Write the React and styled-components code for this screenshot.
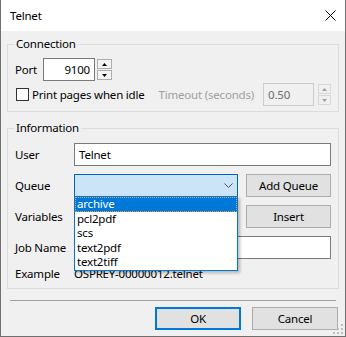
import React from "react";
import styled, { createGlobalStyle } from "styled-components";

const GlobalStyle = createGlobalStyle`
  html, body {
    margin: 0;
    padding: 0;
    background: #ffffff;
  }
  body {
    font-family: "Noto Sans", "Open Sans", sans-serif;
    font-size: 11.5px;
    letter-spacing: -0.2px;
    color: #000;
  }
  * {
    box-sizing: border-box;
  }
`;

const Window = styled.div`
  position: relative;
  width: 346px;
  height: 337px;
  border: 1px solid #6f6f6f;
  border-top: none;
  background: #f0f0f0;
  display: flex;
  flex-direction: column;
`;

const TitleBar = styled.div`
  height: 31px;
  background: #ffffff;
  display: flex;
  align-items: center;
  justify-content: space-between;
  padding: 0 9px 1px 9px;
`;

const Client = styled.div`
  flex: 1;
  display: flex;
  flex-direction: column;
  padding: 0 6px;
`;

const Group = styled.fieldset`
  margin: ${(p) => p.$top}px 0 0 0;
  padding: 0;
  border: 1px solid #dcdcdc;
  min-width: 0;

  legend {
    margin-left: 6px;
    padding: 0 2px;
    line-height: 16px;
  }
`;

const ConnBody = styled.div`
  padding: 6px 7px 5px 7px;
  display: flex;
  flex-direction: column;
  gap: 2px;
`;

const Row = styled.div`
  display: flex;
  align-items: center;
  height: 23px;
`;

const Label = styled.span`
  width: ${(p) => (p.$w ? `${p.$w}px` : "auto")};
  flex: none;
  white-space: nowrap;
  color: ${(p) => (p.$disabled ? "#a0a0a0" : "#000")};
`;

const Edit = styled.div`
  width: ${(p) => p.$w}px;
  height: 23px;
  margin-left: ${(p) => p.$gap || 0}px;
  border: 1px solid ${(p) => (p.$disabled ? "#cccccc" : "#7a7a7a")};
  background: ${(p) => (p.$disabled ? "#f0f0f0" : "#ffffff")};
  color: ${(p) => (p.$disabled ? "#6d6d6d" : "#000")};
  display: flex;
  align-items: center;
  justify-content: ${(p) => (p.$right ? "flex-end" : "flex-start")};
  padding: 0 4px;
  white-space: nowrap;
`;

const Spin = styled.div`
  display: flex;
  flex-direction: column;
  gap: 1px;
  margin-left: ${(p) => p.$gap}px;
  height: 23px;
  justify-content: center;
`;

const SpinBtn = styled.div`
  width: ${(p) => p.$w}px;
  height: 10px;
  border: 1px solid ${(p) => (p.$disabled ? "#d8d8d8" : "#adadad")};
  background: ${(p) => (p.$disabled ? "#f0f0f0" : "#f4f4f4")};
  display: flex;
  align-items: center;
  justify-content: center;
`;

const Arrow = ({ down, color }) => (
  <svg width="5" height="3" viewBox="0 0 5 3">
    <polygon
      points={down ? "0,0 5,0 2.5,3" : "0,3 5,3 2.5,0"}
      fill={color}
    />
  </svg>
);

const Check = styled.div`
  width: 13px;
  height: 13px;
  margin-left: 1px;
  border: 1px solid #333333;
  background: #ffffff;
  flex: none;
`;

const CheckText = styled.span`
  margin-left: 3px;
  white-space: nowrap;
`;

const Timeout = styled.div`
  margin-left: auto;
  display: flex;
  align-items: center;
`;

const InfoBody = styled.div`
  padding: 7px 7px 8px 7px;
  display: grid;
  grid-template-columns: 51px 164px 85px;
  grid-template-rows: 23px 23px 23px 23px 13px;
  column-gap: 8px;
  row-gap: 8px;
  align-items: center;
`;

const Wide = styled.div`
  grid-column: 2 / 4;
  height: 23px;
  border: 1px solid #7a7a7a;
  background: #fff;
  display: flex;
  align-items: center;
  padding: 0 4px;
`;

const Field = styled.div`
  position: relative;
  height: 23px;
  border: 1px solid ${(p) => (p.$focus ? "#0067c0" : "#7a7a7a")};
  background: ${(p) => (p.$focus ? "#cce4f7" : "#fff")};
  display: flex;
  align-items: center;
  justify-content: flex-end;
  padding-right: 4px;
`;

const ExampleText = styled.span`
  grid-column: 2 / 4;
  white-space: nowrap;
`;

const Button = styled.div`
  width: ${(p) => p.$w}px;
  height: 23px;
  border: ${(p) => (p.$default ? "2px solid #0078d7" : "1px solid #adadad")};
  background: #e1e1e1;
  display: flex;
  align-items: center;
  justify-content: center;
  white-space: nowrap;
`;

const DropList = styled.div`
  position: absolute;
  top: 100%;
  left: -1px;
  width: 164px;
  border: 1px solid #0078d7;
  background: #ffffff;
  box-shadow: 2px 2px 3px rgba(0, 0, 0, 0.25);
  z-index: 5;
`;

const Item = styled.div`
  height: 14.6px;
  line-height: 14px;
  padding-left: 2px;
  background: ${(p) => (p.$sel ? "#0078d7" : "transparent")};
  color: ${(p) => (p.$sel ? "#fff" : "#000")};
  outline: ${(p) => (p.$sel ? "1px dotted #f5a04a" : "none")};
  outline-offset: -1px;
`;

const Separator = styled.div`
  margin: 11px 3px 0 3px;
  border-top: 1px solid #a0a0a0;
`;

const Footer = styled.div`
  display: flex;
  justify-content: flex-end;
  gap: 11px;
  margin-top: 6px;
  padding-right: 1px;
`;

const Grip = styled.svg`
  position: absolute;
  right: 2px;
  bottom: 2px;
`;

const queues = ["archive", "pcl2pdf", "scs", "text2pdf", "text2tiff"];

export default function App() {
  return (
    <>
      <GlobalStyle />
      <Window>
        <TitleBar>
          <span>Telnet</span>
          <svg width="11" height="11" viewBox="0 0 11 11">
            <path d="M0.5 0.5 L10.5 10.5 M10.5 0.5 L0.5 10.5" stroke="#000" strokeWidth="1" />
          </svg>
        </TitleBar>
        <Client>
          <Group $top={5}>
            <legend>Connection</legend>
            <ConnBody>
              <Row>
                <Label $w={28}>Port</Label>
                <Edit $w={52} $right>9100</Edit>
                <Spin $gap={2}>
                  <SpinBtn $w={15}><Arrow color="#000" /></SpinBtn>
                  <SpinBtn $w={15}><Arrow down color="#000" /></SpinBtn>
                </Spin>
              </Row>
              <Row>
                <Check />
                <CheckText>Print pages when idle</CheckText>
                <Timeout>
                  <Label $disabled>Timeout (seconds)</Label>
                  <Edit $w={51} $gap={9} $disabled>0.50</Edit>
                  <Spin $gap={4}>
                    <SpinBtn $w={13} $disabled><Arrow color="#a0a0a0" /></SpinBtn>
                    <SpinBtn $w={13} $disabled><Arrow down color="#a0a0a0" /></SpinBtn>
                  </Spin>
                </Timeout>
              </Row>
            </ConnBody>
          </Group>
          <Group $top={8}>
            <legend>Information</legend>
            <InfoBody>
              <Label>User</Label>
              <Wide>Telnet</Wide>

              <Label>Queue</Label>
              <Field $focus>
                <svg width="9" height="5" viewBox="0 0 9 5">
                  <polyline points="0.5,0.5 4.5,4.5 8.5,0.5" fill="none" stroke="#555" strokeWidth="1" />
                </svg>
                <DropList>
                  {queues.map((q, i) => (
                    <Item key={q} $sel={i === 0}>{q}</Item>
                  ))}
                </DropList>
              </Field>
              <Button $w={85}>Add Queue</Button>

              <Label>Variables</Label>
              <Field />
              <Button $w={85}>Insert</Button>

              <Label>Job Name</Label>
              <Wide />

              <Label>Example</Label>
              <ExampleText>OSPREY-00000012.telnet</ExampleText>
            </InfoBody>
          </Group>
          <Separator />
          <Footer>
            <Button $w={86} $default>OK</Button>
            <Button $w={86}>Cancel</Button>
          </Footer>
        </Client>
        <Grip width="11" height="11" viewBox="0 0 11 11">
          {[[9, 1], [9, 5], [5, 5], [9, 9], [5, 9], [1, 9]].map(([x, y]) => (
            <rect key={`${x}-${y}`} x={x} y={y} width="2" height="2" fill="#bdbdbd" />
          ))}
        </Grip>
      </Window>
    </>
  );
}
